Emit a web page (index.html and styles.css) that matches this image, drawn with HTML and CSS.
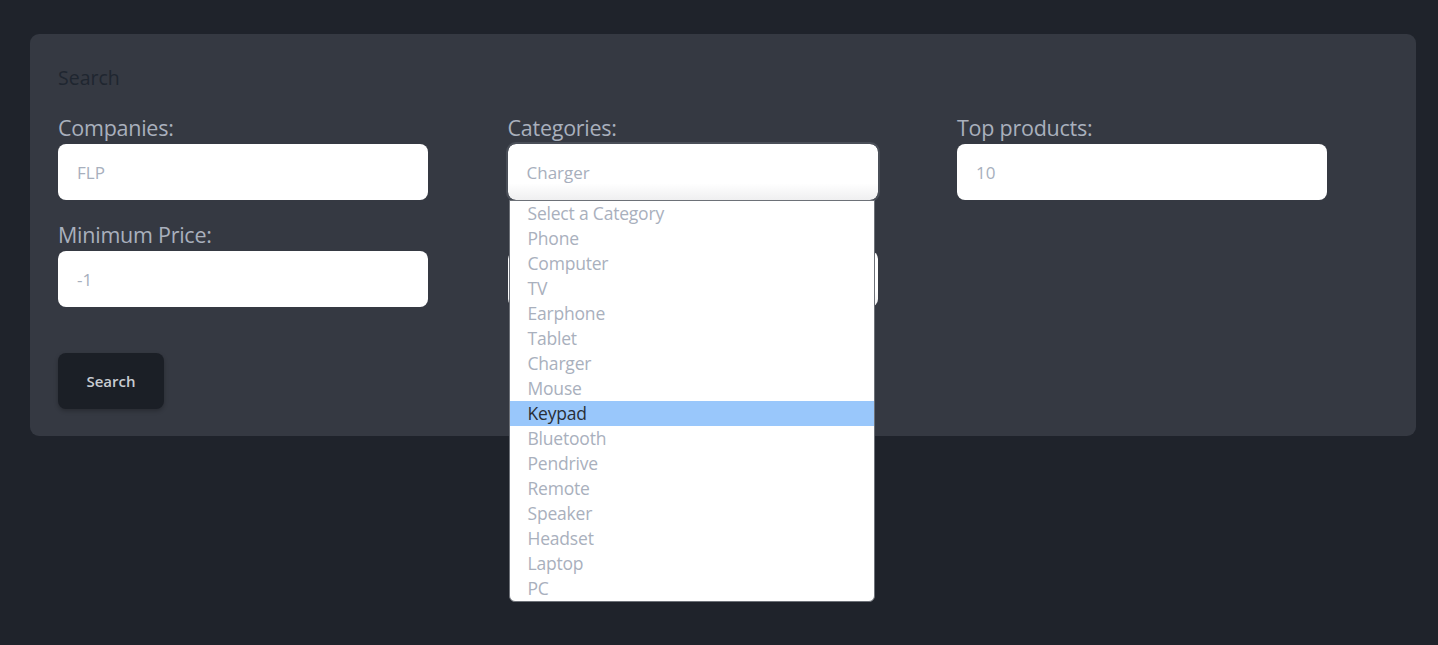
FILE: index.html
```html
<!DOCTYPE html>
<html lang="en">
<head>
<meta charset="utf-8">
<title>Search</title>
<link rel="stylesheet" href="styles.css">
</head>
<body>
<main class="page">
  <section class="card">
    <h2 class="card-title">Search</h2>
    <form class="grid">
      <div class="field">
        <label class="label">Companies:</label>
        <div class="input">FLP</div>
      </div>
      <div class="field field-select">
        <label class="label">Categories:</label>
        <div class="input select focused">Charger</div>
        <ul class="listbox">
          <li class="option">Select a Category</li>
          <li class="option">Phone</li>
          <li class="option">Computer</li>
          <li class="option">TV</li>
          <li class="option">Earphone</li>
          <li class="option">Tablet</li>
          <li class="option">Charger</li>
          <li class="option">Mouse</li>
          <li class="option active">Keypad</li>
          <li class="option">Bluetooth</li>
          <li class="option">Pendrive</li>
          <li class="option">Remote</li>
          <li class="option">Speaker</li>
          <li class="option">Headset</li>
          <li class="option">Laptop</li>
          <li class="option">PC</li>
        </ul>
      </div>
      <div class="field">
        <label class="label">Top products:</label>
        <div class="input">10</div>
      </div>
      <div class="field">
        <label class="label">Minimum Price:</label>
        <div class="input">-1</div>
      </div>
      <div class="field">
        <span class="label label-empty"></span>
        <div class="input select"></div>
      </div>
    </form>
    <div class="actions">
      <button class="btn" type="button">Search</button>
    </div>
  </section>
</main>
</body>
</html>
```

FILE: styles.css
```css
* { box-sizing: border-box; }
html, body { margin: 0; padding: 0; }
body {
  background: #1f232b;
  font-family: "Open Sans", "Noto Sans", sans-serif;
  color: #a9b0bd;
  height: 645px;
  overflow: hidden;
}
.page {
  padding: 34px 22px 0 30px;
}
.card {
  background: #353942;
  border-radius: 9px;
  padding: 28px 28px 27px 28px;
}
.card-title {
  margin: 0;
  font-size: 19.5px;
  font-weight: 400;
  line-height: 32px;
  color: #1f2630;
}
.grid {
  display: grid;
  grid-template-columns: repeat(3, 370px);
  column-gap: 79.5px;
  row-gap: 27px;
  margin-top: 26px;
}
.field {
  display: flex;
  flex-direction: column;
  position: relative;
}
.label {
  display: block;
  font-size: 21.5px;
  line-height: 16px;
  height: 24px;
  color: #a9b0bd;
  letter-spacing: -0.25px;
  white-space: nowrap;
}
.input {
  height: 56px;
  background: #ffffff;
  border-radius: 8px;
  padding: 0 19px;
  display: flex;
  align-items: center;
  font-size: 17px;
  color: #a7afbd;
}
.select {
  background: linear-gradient(#ffffff 70%, #efeff0 100%);
}
.focused {
  outline: 2px solid #4a4f58;
  outline-offset: 0;
}
.listbox {
  position: absolute;
  left: 1px;
  top: 100%;
  width: 366px;
  margin: 0;
  padding: 0;
  list-style: none;
  background: #ffffff;
  border: 1px solid #6d7178;
  border-radius: 0 0 6px 6px;
  z-index: 5;
  overflow: hidden;
}
.option {
  height: 25px;
  line-height: 25px;
  padding-left: 18px;
  font-size: 17.5px;
  color: #a9b0bd;
  letter-spacing: -0.2px;
}
.option.active {
  background: #99c7fb;
  color: #2a2f37;
}
.actions {
  margin-top: 46px;
}
.btn {
  width: 106px;
  height: 56px;
  border: 0;
  border-radius: 8px;
  background: #1b1f26;
  color: #c8ccd2;
  font-family: "Open Sans", "Noto Sans", sans-serif;
  font-weight: 600;
  font-size: 15px;
  box-shadow: 0 2px 4px rgba(0,0,0,0.25);
}
```
